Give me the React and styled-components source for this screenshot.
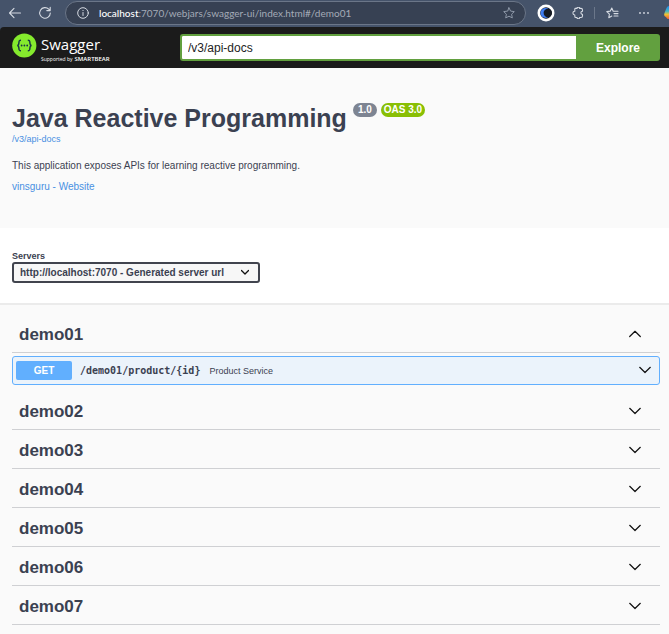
import React, { useState } from "react";
import styled, { createGlobalStyle } from "styled-components";

const sans = `"Liberation Sans", Arial, sans-serif`;
const ink = "#3b4151";
const link = "#4990e2";

const GlobalStyle = createGlobalStyle`
  *, *::before, *::after { box-sizing: border-box; }
  html { background: #fafafa; }
  body { margin: 0; font-family: ${sans}; color: ${ink}; }
  button, input, select { font: inherit; color: inherit; margin: 0; }
  svg { display: block; flex: none; }
`;

const BrowserBar = styled.header`
  display: flex;
  align-items: center;
  height: 27px;
  padding: 0 0 2px 6px;
  background: #45536a;
  overflow: hidden;
`;

const IconButton = styled.button`
  display: grid;
  place-items: center;
  flex: none;
  width: ${(p) => p.$width || 32}px;
  height: 24px;
  padding: 0;
  border: 0;
  background: none;
  color: ${(p) => p.$color || "#d5dae2"};
`;

const ProfileButton = styled(IconButton)`
  justify-items: start;
  width: 9px;
  padding-left: 4px;
  overflow: hidden;
`;

const Navigation = styled.div`
  display: flex;
  gap: 10px;
`;

const AddressPill = styled.div`
  display: flex;
  align-items: center;
  flex: 1;
  height: 24px;
  margin: 0 4px 0 8px;
  padding: 0 5px 0 1px;
  border: 1px solid #6b7688;
  border-radius: 12px;
  background: #374153;
`;

const Address = styled.div`
  flex: 1;
  font: 10px/16px Lato, sans-serif;
  color: #a4abb7;
  white-space: nowrap;

  strong { font-weight: 500; color: #fff; }
`;

const BarDivider = styled.span`
  flex: none;
  width: 1px;
  height: 12px;
  margin-right: 1px;
  background: #6b778a;
`;

const Topbar = styled.div`
  background: #45536a;
`;

const TopbarInner = styled.div`
  display: flex;
  align-items: center;
  gap: 68px;
  height: 41px;
  padding: 0 9px 0 12px;
  border-radius: 4px 0 0 0;
  background: #1b1b1b;
`;

const Brand = styled.a`
  display: flex;
  align-items: flex-start;
  gap: 4px;
  flex: none;
  color: #fff;
  text-decoration: none;
`;

const BrandText = styled.span`
  display: flex;
  flex-direction: column;
  width: 71px;
  padding-top: 2px;
  font-family: "Open Sans", "Noto Sans", sans-serif;
`;

const BrandName = styled.span`
  font-size: 15px;
  line-height: 18px;

  small { font-size: 8px; }
`;

const BrandTagline = styled.span`
  display: flex;
  align-items: baseline;
  gap: 2px;
  font-size: 5px;
  line-height: 6px;
  white-space: nowrap;

  strong { font-size: 6px; font-weight: 600; }
`;

const SpecForm = styled.form`
  display: flex;
  flex: 1;
  height: 27px;
`;

const SpecInput = styled.input`
  flex: 1;
  min-width: 0;
  padding: 0 6px;
  border: 2px solid #62a03f;
  border-right: 0;
  border-radius: 3px 0 0 3px;
  outline: 0;
  background: #fff;
  font-size: 12px;
  color: #222;
`;

const ExploreButton = styled.button`
  width: 84px;
  padding: 0;
  border: 0;
  border-radius: 0 3px 3px 0;
  background: #62a03f;
  font-size: 12px;
  font-weight: 700;
  color: #fff;
`;

const Info = styled.section`
  padding: 35px 12px;
  font-size: 10px;
`;

const Title = styled.h1`
  display: flex;
  align-items: flex-start;
  gap: 6px;
  margin: 0;
  font-size: 25px;
  line-height: 30px;
  white-space: nowrap;
`;

const Badges = styled.span`
  display: flex;
  gap: 4px;
`;

const Badge = styled.span`
  height: 14px;
  padding: 0 ${(p) => p.$pad}px;
  border-radius: 7px;
  background: ${(p) => p.$color};
  font-size: 10px;
  line-height: 14px;
  color: #fff;
`;

const Link = styled.a`
  display: block;
  width: max-content;
  font-size: ${(p) => (p.$small ? 9 : 10)}px;
  line-height: 12px;
  color: ${link};
  text-decoration: none;
`;

const Description = styled.p`
  margin: 15px 0 9px;
  line-height: 12px;
`;

const Servers = styled.section`
  padding: 22px 12px 20px;
  border-bottom: 2px solid #ebebeb;
  background: #fff;
`;

const ServersLabel = styled.label`
  display: block;
  font-size: 9px;
  font-weight: 700;
  line-height: 12px;
`;

const SelectWrap = styled.div`
  display: grid;
  align-items: center;
  width: 248px;

  > * { grid-area: 1 / 1; }
  > svg { justify-self: end; margin-right: 11px; pointer-events: none; }
`;

const ServerSelect = styled.select`
  appearance: none;
  width: 100%;
  height: 21px;
  padding: 0 24px 0 6px;
  border: 2px solid #41444e;
  border-radius: 3px;
  background: #f7f7f7;
  font-size: 10px;
  font-weight: 700;
`;

const Tags = styled.main`
  padding: 9px 9px 0 12px;
`;

const TagHeader = styled.h2`
  margin: 0;
  border-bottom: 1px solid #cfd0d3;
`;

const TagButton = styled.button`
  display: flex;
  align-items: center;
  justify-content: space-between;
  width: 100%;
  height: 38px;
  padding: 4px 19px 0 7px;
  border: 0;
  background: none;
  font-size: 17px;
  font-weight: 700;
  line-height: 20px;
`;

const Operation = styled.button`
  display: flex;
  align-items: center;
  width: 100%;
  height: 29px;
  margin: 3px 0 6px;
  padding: 0 8px 0 3px;
  border: 1px solid #61affe;
  border-radius: 3px;
  background: #ebf3fb;
  text-align: left;
`;

const Method = styled.span`
  width: 56px;
  height: 19px;
  border-radius: 2px;
  background: #61affe;
  font-size: 10px;
  font-weight: 700;
  line-height: 19px;
  text-align: center;
  color: #fff;
`;

const Path = styled.span`
  margin: 0 9px 0 8px;
  font: 700 10px/14px "DejaVu Sans Mono", monospace;
`;

const Summary = styled.span`
  flex: 1;
  font-size: 9px;
`;

const Chevron = ({ up, size = 12, stroke = 1.2 }) => (
  <svg width={size} height={size} viewBox="0 0 12 12" fill="none" stroke="#111" strokeWidth={stroke} strokeLinecap="round" strokeLinejoin="round" aria-hidden="true">
    <path d={up ? "M.7 7.5 6 2.3l5.3 5.2" : "M.7 2.3 6 7.5l5.3-5.2"} />
  </svg>
);

const line = { fill: "none", stroke: "currentColor", strokeLinecap: "round", strokeLinejoin: "round", "aria-hidden": true };

const BackIcon = () => (
  <svg width="14" height="14" viewBox="0 0 14 14" strokeWidth="1.1" {...line}><path d="M12.5 7h-11M6 2.3 1.5 7 6 11.7" /></svg>
);
const ReloadIcon = () => (
  <svg width="14" height="14" viewBox="0 0 14 14" strokeWidth="1.1" {...line}><path d="M12.3 7A5.3 5.3 0 1 1 10.8 3.2L12 4.5M12.2 1.2v3.4H8.8" /></svg>
);
const InfoIcon = () => (
  <svg width="12" height="12" viewBox="0 0 12 12" strokeWidth="1" {...line}><circle cx="6" cy="6" r="5.3" /><path d="M6 5.5v3M6 3.4v.2" /></svg>
);
const StarIcon = () => (
  <svg width="12" height="12" viewBox="0 0 12 12" strokeWidth="1" {...line}><path d="m6 .8 1.6 3.3 3.7.5-2.7 2.6.7 3.7L6 9.2l-3.3 1.7.7-3.7L.7 4.6l3.7-.5z" /></svg>
);
const ExtensionIcon = () => (
  <svg width="18" height="18" viewBox="0 0 18 18" aria-hidden="true"><circle cx="9" cy="9" r="8.5" fill="#fff" /><circle cx="9" cy="9" r="5.8" fill="#101622" /><circle cx="8.5" cy="9" r="5" fill="#3f7df0" /><circle cx="10.8" cy="9" r="4.2" fill="#151a22" /></svg>
);
const PuzzleIcon = () => (
  <svg width="12" height="12" viewBox="0 0 12 12" strokeWidth="1.1" {...line}><path d="M3 1.400h2a1.300 1.300 0 0 1 2.600 0h1.400q1.500 0 1.500 1.500v1.300a1.600 1.600 0 0 0 0 3.200v1.600q0 1.500-1.500 1.500H7.600a1.300 1.300 0 0 1-2.600 0H3.900Q2.800 10.500 2.800 9.200V8a1.900 1.900 0 1 1 0-3.800V1.900z" /></svg>
);
const FavoritesIcon = () => (
  <svg width="13" height="12" viewBox="0 0 13 12" strokeWidth="1.1" {...line}><path d="M7.2 4.2 5.8 1 4.3 4.1.8 4.6l2.6 2.5-.6 3.6 3-1.6M7.2 4.2H12M8 6.6h4M8 9h4" /></svg>
);
const MoreIcon = () => (
  <svg width="12" height="4" viewBox="0 0 12 4" fill="currentColor" aria-hidden="true"><circle cx="2" cy="2" r=".9" /><circle cx="6" cy="2" r=".9" /><circle cx="10" cy="2" r=".9" /></svg>
);
const CopilotIcon = () => (
  <svg width="16" height="16" viewBox="0 0 16 16" aria-hidden="true">
    <defs>
      <linearGradient id="copilot" x1="0" y1="0" x2="0" y2="1">
        <stop offset="0" stopColor="#2689e8" />
        <stop offset=".4" stopColor="#42b8c5" />
        <stop offset=".65" stopColor="#f2c230" />
        <stop offset="1" stopColor="#ee5b3a" />
      </linearGradient>
    </defs>
    <path d="M5 1h7v13H4c-1 0-1.5-2-3-2.5C0 10.500 0 9.500.5 8L2.500 3C3 1.700 4 1 5 1z" fill="url(#copilot)" />
  </svg>
);
const SwaggerMark = () => (
  <svg width="25" height="25" viewBox="0 0 25 25" aria-hidden="true">
    <circle cx="12.3" cy="12.5" r="12.1" fill="#85ea2d" />
    <g fill="none" stroke="#173647" strokeWidth="1.5">
      <path d="M9 7.2c-2 0-2.100.6-2.100 2.700 0 1.600-.5 2.400-1.600 2.600 1.100.2 1.600 1 1.600 2.600 0 2.100.1 2.700 2.100 2.700M15.800 7.200c2 0 2.100.6 2.100 2.700 0 1.600.5 2.400 1.600 2.600-1.100.2-1.600 1-1.600 2.600 0 2.100-.1 2.700-2.100 2.700" />
    </g>
    <g fill="#173647"><circle cx="9.6" cy="12.5" r=".9" /><circle cx="12.4" cy="12.5" r=".9" /><circle cx="15.2" cy="12.5" r=".9" /></g>
  </svg>
);

const tags = ["demo01", "demo02", "demo03", "demo04", "demo05", "demo06", "demo07"];

export default function App() {
  const [open, setOpen] = useState({ demo01: true });
  const toggle = (tag) => setOpen((o) => ({ ...o, [tag]: !o[tag] }));

  return (
    <>
      <GlobalStyle />
      <BrowserBar>
        <Navigation>
          <IconButton $width={17} aria-label="Back"><BackIcon /></IconButton>
          <IconButton $width={24} aria-label="Reload"><ReloadIcon /></IconButton>
        </Navigation>
        <AddressPill>
          <IconButton aria-label="Site information"><InfoIcon /></IconButton>
          <Address><strong>localhost</strong>:7070/webjars/swagger-ui/index.html#/demo01</Address>
          <IconButton $width={22} $color="#8e98a8" aria-label="Add to favorites"><StarIcon /></IconButton>
        </AddressPill>
        <IconButton aria-label="Dark mode extension"><ExtensionIcon /></IconButton>
        <IconButton aria-label="Extensions"><PuzzleIcon /></IconButton>
        <BarDivider />
        <IconButton aria-label="Favorites"><FavoritesIcon /></IconButton>
        <IconButton aria-label="More"><MoreIcon /></IconButton>
        <ProfileButton aria-label="Copilot"><CopilotIcon /></ProfileButton>
      </BrowserBar>

      <Topbar>
        <TopbarInner>
          <Brand href="#">
            <SwaggerMark />
            <BrandText>
              <BrandName>Swagger<small>.</small></BrandName>
              <BrandTagline>Supported by <strong>SMARTBEAR</strong></BrandTagline>
            </BrandText>
          </Brand>
          <SpecForm onSubmit={(e) => e.preventDefault()}>
            <SpecInput aria-label="API definition" defaultValue="/v3/api-docs" />
            <ExploreButton>Explore</ExploreButton>
          </SpecForm>
        </TopbarInner>
      </Topbar>

      <Info>
        <Title>
          Java Reactive Programming
          <Badges>
            <Badge $color="#7d8492" $pad={5}>1.0</Badge>
            <Badge $color="#89bf04" $pad={3}>OAS 3.0</Badge>
          </Badges>
        </Title>
        <Link $small href="/v3/api-docs">/v3/api-docs</Link>
        <Description>This application exposes APIs for learning reactive programming.</Description>
        <Link href="#website">vinsguru - Website</Link>
      </Info>

      <Servers>
        <ServersLabel htmlFor="servers">Servers</ServersLabel>
        <SelectWrap>
          <ServerSelect id="servers"><option>http://localhost:7070 - Generated server url</option></ServerSelect>
          <Chevron size={8} stroke={2} />
        </SelectWrap>
      </Servers>

      <Tags>
        {tags.map((tag) => (
          <section key={tag}>
            <TagHeader>
              <TagButton aria-expanded={!!open[tag]} onClick={() => toggle(tag)}>
                {tag}
                <Chevron up={open[tag]} />
              </TagButton>
            </TagHeader>
            {tag === "demo01" && open[tag] && (
              <Operation>
                <Method>GET</Method>
                <Path>/demo01/product/{"{id}"}</Path>
                <Summary>Product Service</Summary>
                <Chevron />
              </Operation>
            )}
          </section>
        ))}
      </Tags>
    </>
  );
}
